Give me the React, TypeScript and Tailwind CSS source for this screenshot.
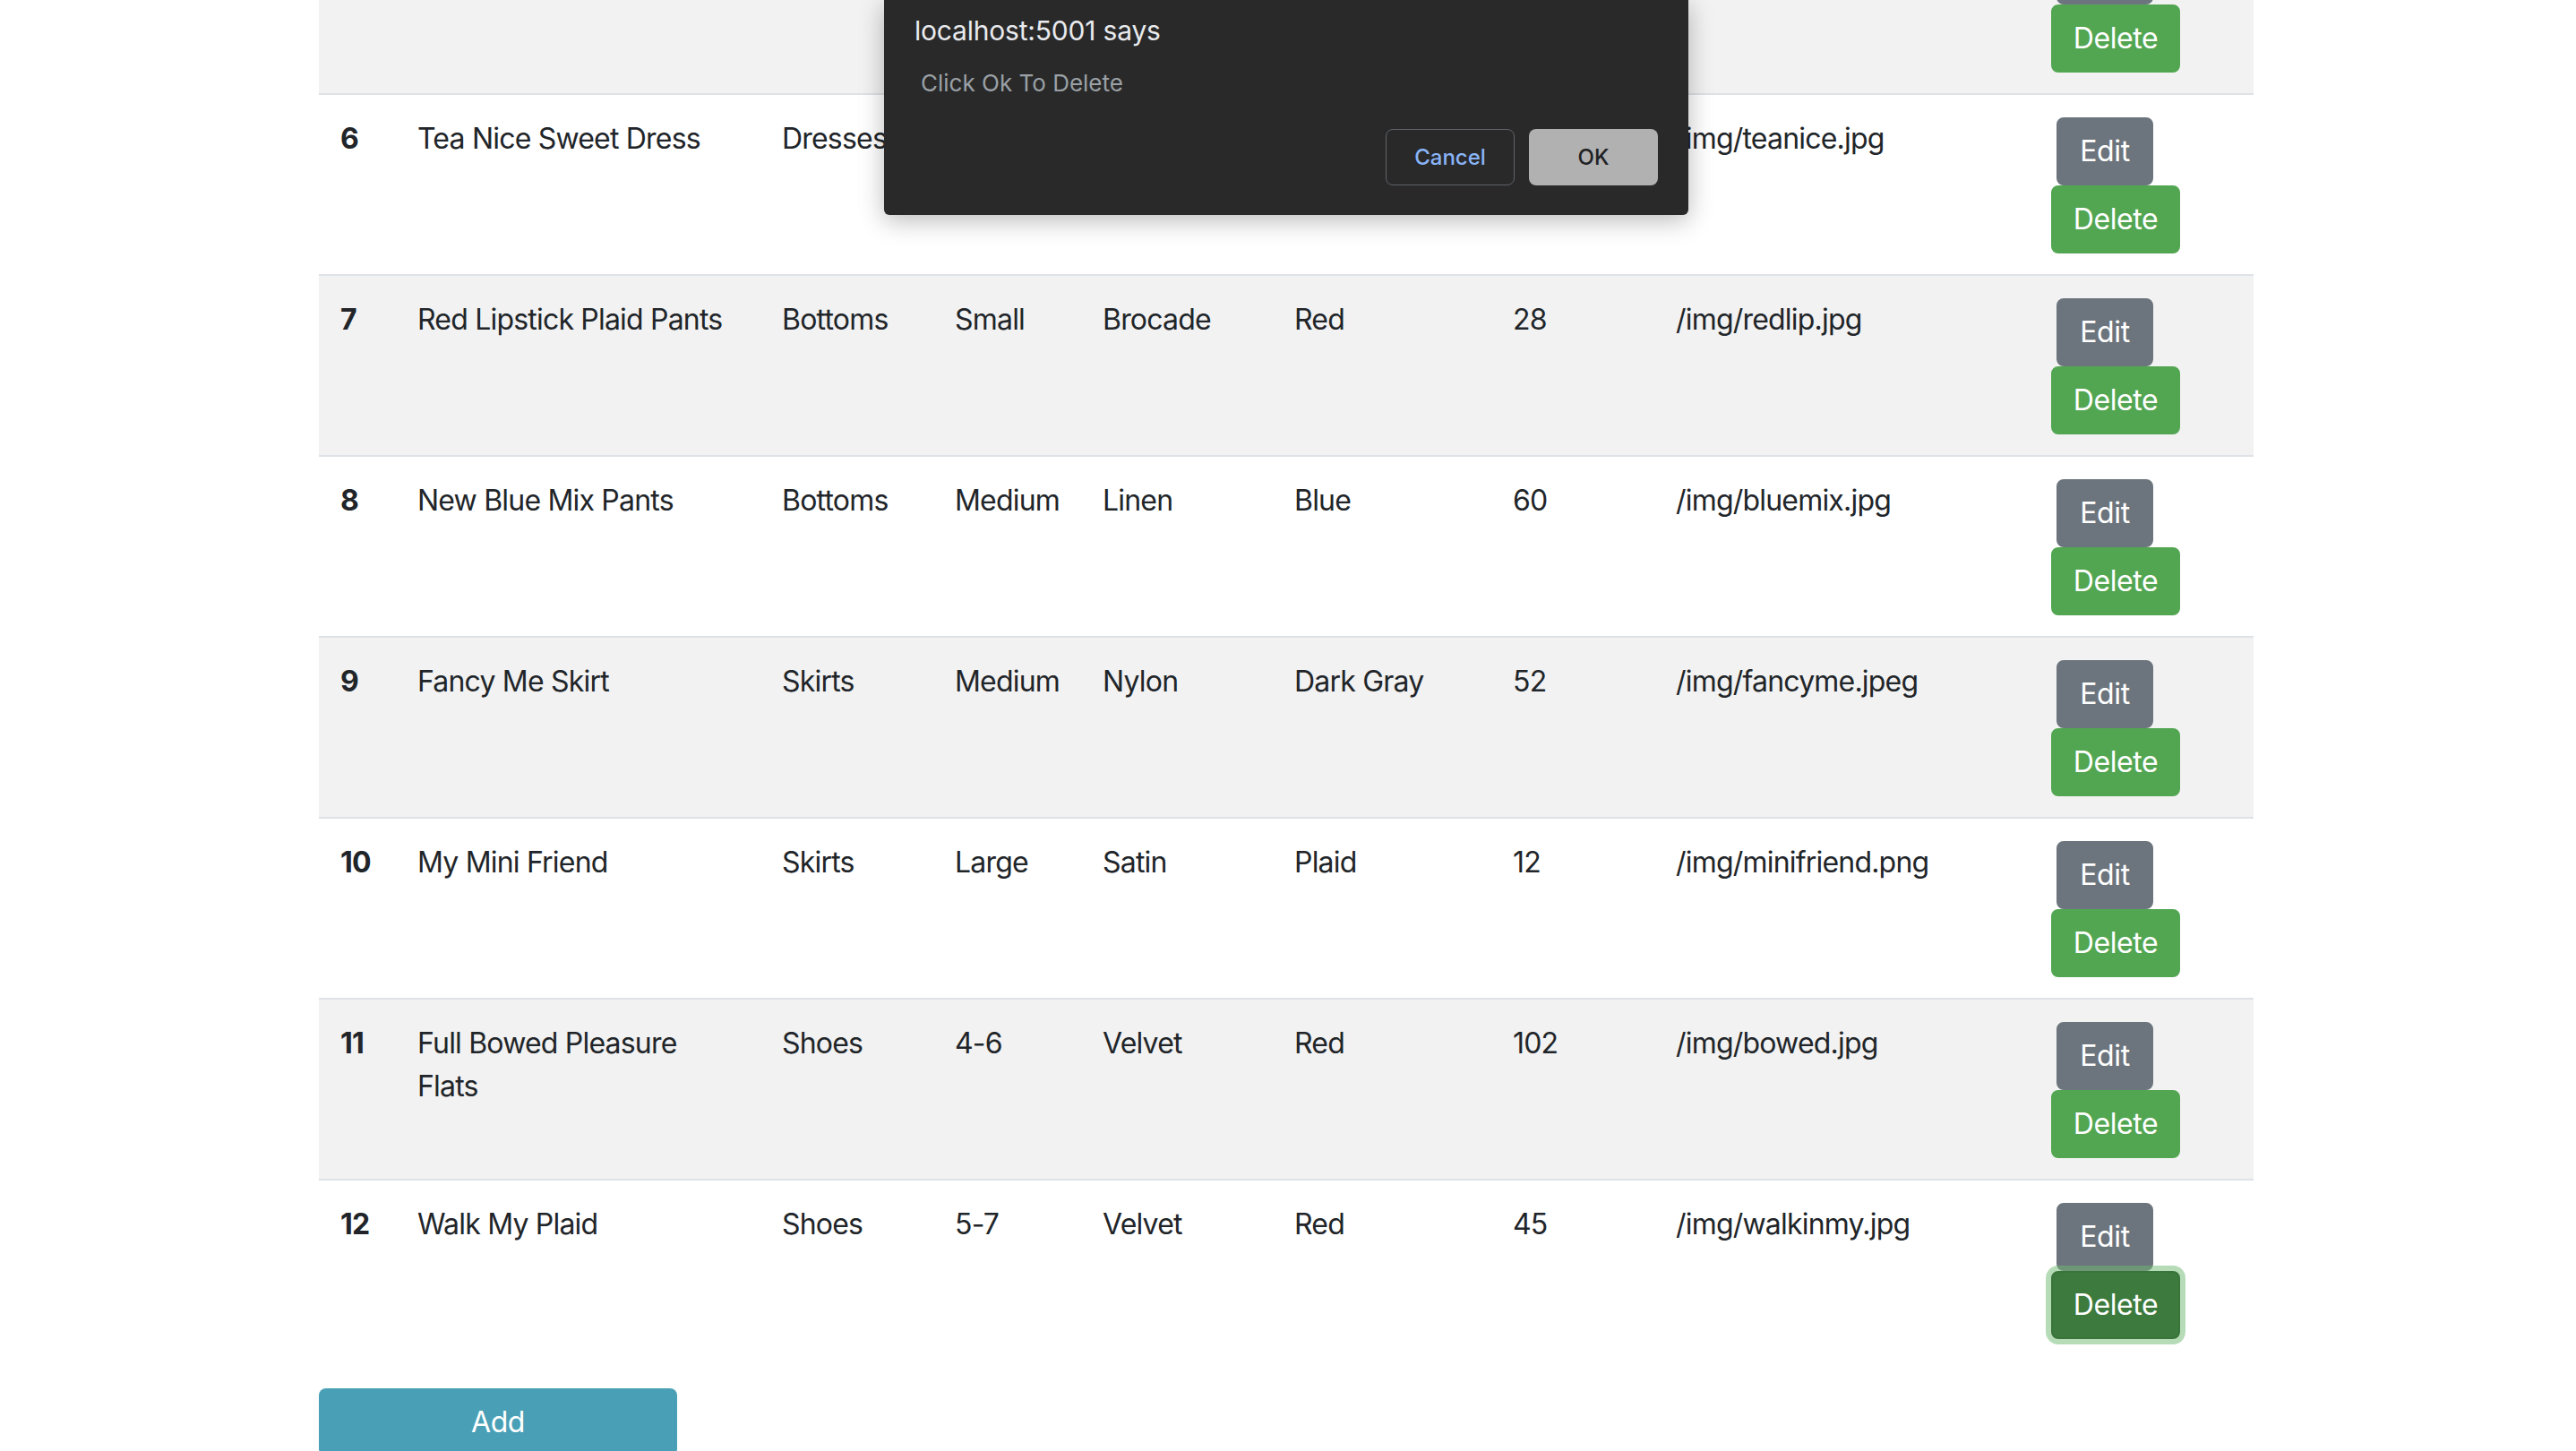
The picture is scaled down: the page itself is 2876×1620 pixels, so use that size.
import React from "react";

type Row = {
  id: string;
  name: string;
  category: string;
  size: string;
  material: string;
  color: string;
  price: string;
  image: string;
  focused?: boolean;
};

const rows: Row[] = [
  { id: "", name: "", category: "", size: "", material: "", color: "", price: "", image: "" },
  { id: "6", name: "Tea Nice Sweet Dress", category: "Dresses", size: "Small", material: "Cotton", color: "Pink", price: "40", image: "/img/teanice.jpg" },
  { id: "7", name: "Red Lipstick Plaid Pants", category: "Bottoms", size: "Small", material: "Brocade", color: "Red", price: "28", image: "/img/redlip.jpg" },
  { id: "8", name: "New Blue Mix Pants", category: "Bottoms", size: "Medium", material: "Linen", color: "Blue", price: "60", image: "/img/bluemix.jpg" },
  { id: "9", name: "Fancy Me Skirt", category: "Skirts", size: "Medium", material: "Nylon", color: "Dark Gray", price: "52", image: "/img/fancyme.jpeg" },
  { id: "10", name: "My Mini Friend", category: "Skirts", size: "Large", material: "Satin", color: "Plaid", price: "12", image: "/img/minifriend.png" },
  { id: "11", name: "Full Bowed Pleasure Flats", category: "Shoes", size: "4-6", material: "Velvet", color: "Red", price: "102", image: "/img/bowed.jpg" },
  { id: "12", name: "Walk My Plaid", category: "Shoes", size: "5-7", material: "Velvet", color: "Red", price: "45", image: "/img/walkinmy.jpg", focused: true },
];

const td = "align-top px-[24px] pt-[25px] pb-[23px] border-t-2 border-[#dee2e6]";
const tdBtn = "align-top px-[24px] pt-[25px] pb-[23px] border-t-2 border-[#dee2e6]";

export default function App() {
  return (
    <div
      className="relative min-h-[1620px] bg-white text-[#212529] overflow-hidden"
      style={{ fontFamily: "Inter, 'Noto Sans', sans-serif" }}
    >
      <div className="w-[2160px] ml-[356px] mt-[-98px]">
        <table className="w-[2160px] table-fixed border-collapse text-[32px] leading-[48px] tracking-[-0.8px]">
          <colgroup>
            <col className="w-[86px]" />
            <col className="w-[407px]" />
            <col className="w-[193px]" />
            <col className="w-[165px]" />
            <col className="w-[214px]" />
            <col className="w-[244px]" />
            <col className="w-[182px]" />
            <col className="w-[419px]" />
            <col className="w-[250px]" />
          </colgroup>
          <tbody>
            {rows.map((r, i) => (
              <tr key={i} className={i % 2 === 0 ? "bg-[#f2f2f2]" : "bg-white"}>
                <th className={`${td} text-left font-bold`}>{r.id}</th>
                <td className={td}>{r.name}</td>
                <td className={td}>{r.category}</td>
                <td className={td}>{r.size}</td>
                <td className={td}>{r.material}</td>
                <td className={td}>{r.color}</td>
                <td className={td}>{r.price}</td>
                <td className={td}>{r.image}</td>
                <td className={tdBtn}>
                  <div className="flex flex-col items-start tracking-[-0.4px]">
                    <button className="ml-[6px] w-[108px] h-[76px] rounded-[8px] bg-[#6c757d] border-2 border-[#6c757d] text-white text-[32px] leading-[48px]">
                      Edit
                    </button>
                    {r.focused ? (
                      <button className="w-[144px] h-[76px] rounded-[8px] bg-[#3c7a3d] border-2 border-[#39743a] text-white text-[32px] leading-[48px] shadow-[0_0_0_6px_rgba(110,186,112,0.5)]">
                        Delete
                      </button>
                    ) : (
                      <button className="w-[144px] h-[76px] rounded-[8px] bg-[#52a652] border-2 border-[#52a652] text-white text-[32px] leading-[48px]">
                        Delete
                      </button>
                    )}
                  </div>
                </td>
              </tr>
            ))}
          </tbody>
        </table>
        <div className="mt-[32px]">
          <button className="w-[400px] h-[76px] rounded-[8px] bg-[#49a0b6] text-white text-[32px] leading-[48px] tracking-[-0.4px]">
            Add
          </button>
        </div>
      </div>

      {/* Browser confirm dialog */}
      <div className="absolute top-0 left-[987px] w-[898px] h-[240px] bg-[#292929] rounded-b-[6px] shadow-[0_6px_28px_rgba(0,0,0,0.28)] flex flex-col px-[34px] pt-[16px] pb-[33px]">
        <div className="text-[30px] leading-[36px] text-[#e8eaed] tracking-[-0.2px]">localhost:5001 says</div>
        <div className="ml-[7px] mt-[26px] text-[26px] leading-[30px] text-[#9aa0a6]">Click Ok To Delete</div>
        <div className="mt-auto flex justify-end gap-[16px]">
          <button className="w-[144px] h-[63px] rounded-[8px] border border-[#5f6368] bg-transparent text-[#8ab4f8] text-[24px] font-medium">
            Cancel
          </button>
          <button className="w-[144px] h-[63px] rounded-[8px] bg-[#b1b1b1] text-[#202124] text-[24px] font-medium">
            OK
          </button>
        </div>
      </div>
    </div>
  );
}
